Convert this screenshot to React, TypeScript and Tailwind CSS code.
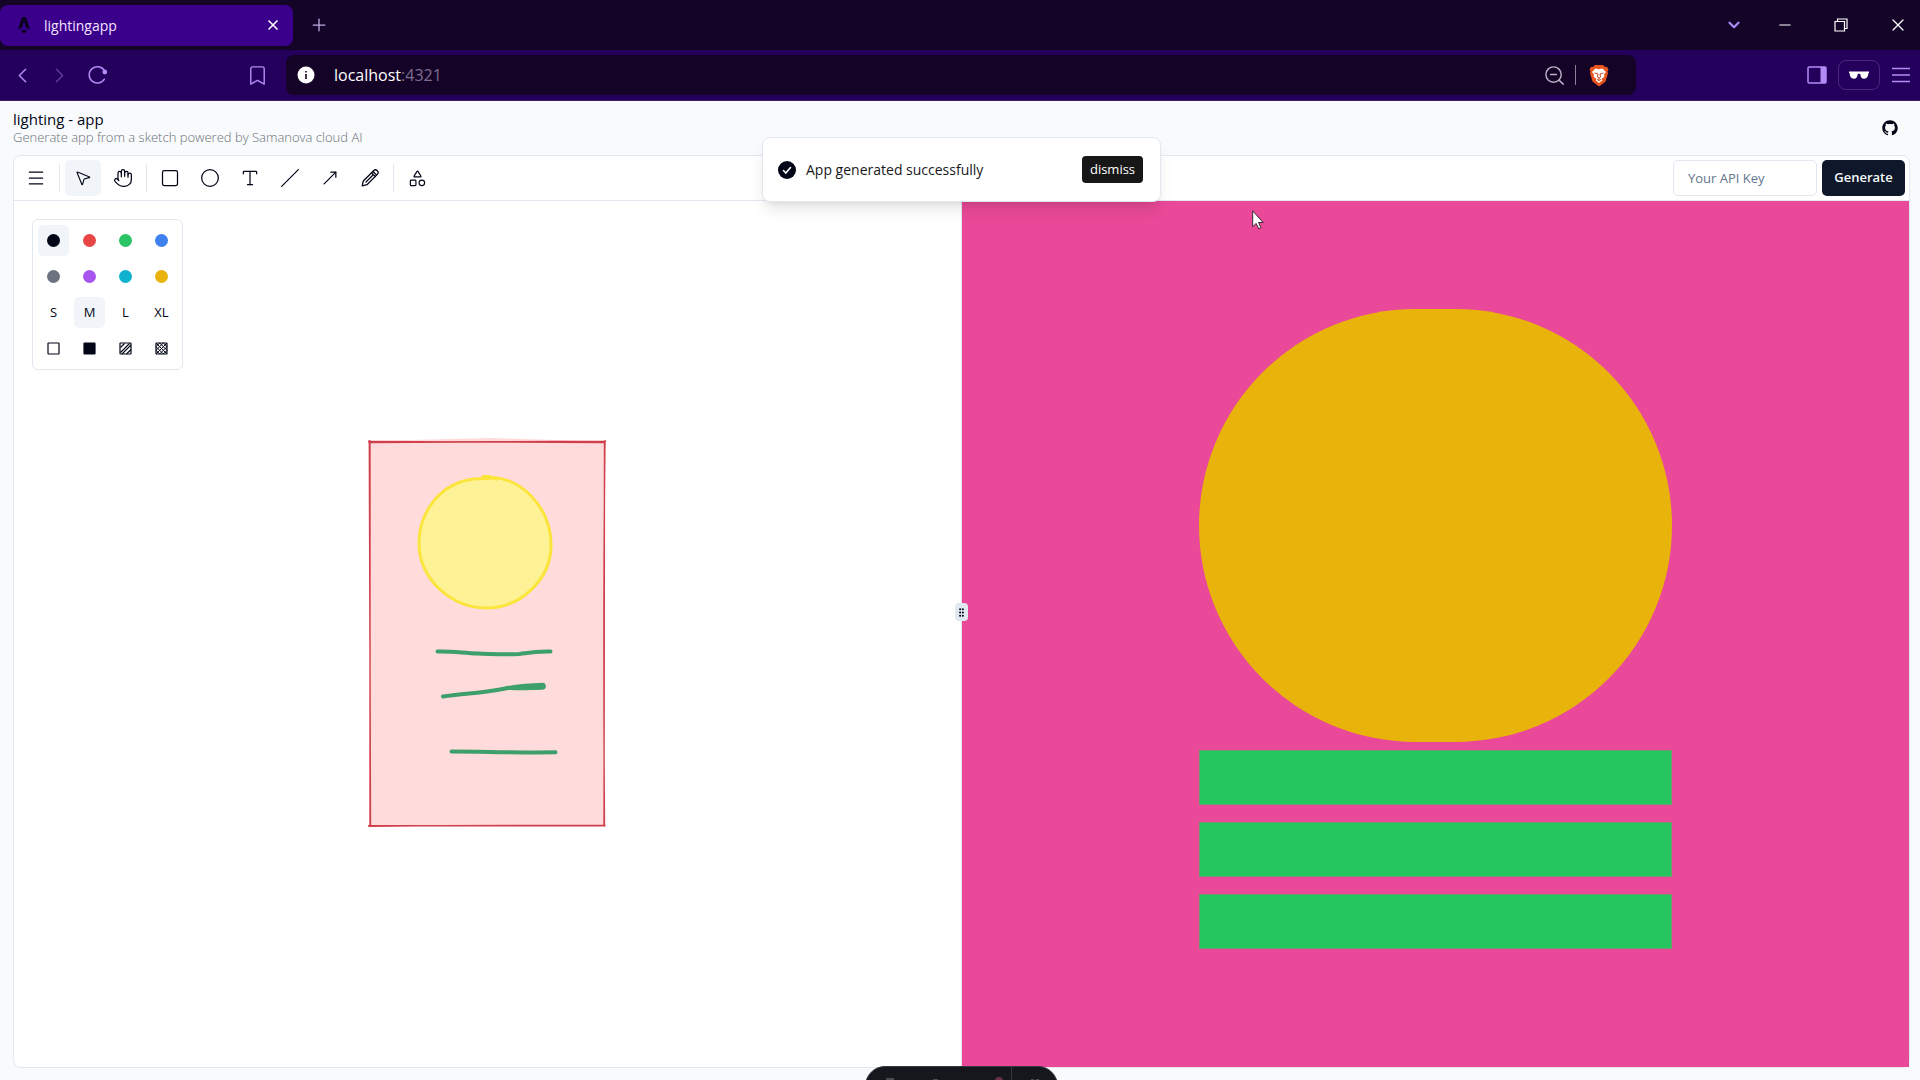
import React, { useState } from "react";
import {
  ChevronLeft,
  ChevronRight,
  ChevronDown,
  Circle,
  GripVertical,
  Bookmark,
  Hand,
  Menu,
  Minus,
  MousePointer2,
  MoveUpRight,
  Plus,
  Shapes,
  Slash,
  Square,
  Type,
  X,
  ZoomOut,
} from "lucide-react";
import { RxGithubLogo } from "react-icons/rx";

const COLORS = [
  { name: "black", className: "bg-[#020617]" },
  { name: "red", className: "bg-[#e84545]" },
  { name: "green", className: "bg-[#29c463]" },
  { name: "blue", className: "bg-[#3f81ee]" },
  { name: "gray", className: "bg-[#6b7280]" },
  { name: "purple", className: "bg-[#a855f0]" },
  { name: "cyan", className: "bg-[#0fb3d0]" },
  { name: "yellow", className: "bg-[#e8b30b]" },
];

const SIZES = ["S", "M", "L", "XL"];
const FILLS = ["none", "solid", "hachure", "cross"];

function ReloadIcon() {
  return (
    <svg width="20" height="20" viewBox="0 0 20 20" fill="none" stroke="currentColor" strokeWidth="1.5">
      <path d="M16.4 14.2a8.2 8.2 0 1 1 0-8.6" strokeLinecap="round" />
      <circle cx="16.8" cy="7" r="2.4" fill="currentColor" stroke="none" />
    </svg>
  );
}

function AstroIcon() {
  return (
    <svg width="14" height="18" viewBox="0 0 14 18" fill="#0b0220">
      <path d="M5 1h4l4 12.5q-2-1.1-4-1.4L7 5 5 12.1q-2 .3-4 1.4z" />
      <path d="M4 13.5q3 1.5 6 0 .3 2-3 4-3.3-2-3-4z" />
    </svg>
  );
}

function BraveIcon() {
  return (
    <svg width="20" height="23" viewBox="0 0 20 23">
      <path d="M6 1h8l2 2 2-.2 1.500 3-1 1.500.5 2-2.500 8.200-6.500 5-6.500-5L1 9.300l.5-2-1-1.500 1.500-3L4 3z" fill="#e8541d" />
      <path d="M6.500 4.500 10 5.200l3.500-.7L17 8l-2 2.600.4 2.200-3 2.200 1 1.200L10 19l-3.400-2.800 1-1.200-3-2.200.4-2.200L3 8z" fill="#fff" />
      <path d="M5.500 9 9 10l-.5 3L10 14l1.500-1L11 10l3.500-1M10 14v2M8 15.500l2 1 2-1" fill="none" stroke="#c8481a" />
    </svg>
  );
}

function PencilIcon({ size = 20 }: { size?: number; strokeWidth?: number }) {
  return (
    <svg width={size} height={size} viewBox="0 0 20 20" fill="none" stroke="currentColor" strokeWidth="1.25" strokeLinecap="round" strokeLinejoin="round">
      <path d="M2.200 17.800 3.300 13 13.600 2.700a2.500 2.500 0 0 1 3.700 3.700L7 16.700z" />
      <path d="M11.500 4.800l3.700 3.700M13.300 3.700l3.200 3.200M6 14l6.500-6.500" />
    </svg>
  );
}

function FillIcon({ kind }: { kind: string }) {
  return (
    <svg width="13" height="13" viewBox="0 0 13 13" fill={kind === "solid" ? "#020617" : "none"} stroke="#020617">
      <rect x="1" y="1" width="11" height="11" rx="0.5" strokeWidth="1.2" />
      {kind === "hachure" && <path d="M1.500 5.500l4-4M1.500 10.500l9-9M3 12l9-9M7.500 12 12 7.500" strokeWidth="1.1" />}
      {kind === "cross" && (
        <path d="M1 4.700 4.700 1M1 8.300 8.300 1M1 12 12 1M4.700 12 12 4.700M8.300 12 12 8.300M8.300 1 12 4.700M4.700 1 12 8.300M1 1l11 11M1 4.700 8.300 12M1 8.300 4.700 12" />
      )}
    </svg>
  );
}

function TabStrip() {
  return (
    <div className="flex h-[50px] items-center bg-[#130428] text-white">
      <div className="flex h-[41px] w-[293px] items-center rounded-lg bg-[#3a008c] pr-2 pl-[17px]">
        <AstroIcon />
        <span className="ml-[13px] flex-1 text-[14px] text-[#f0e4ff]">lightingapp</span>
        <button type="button" aria-label="Close tab" className="p-1">
          <X size={16} strokeWidth={2.5} />
        </button>
      </div>
      <button type="button" aria-label="New tab" className="ml-4 text-[#c3aee6]">
        <Plus size={20} strokeWidth={1.5} />
      </button>
      <div className="ml-auto flex items-center gap-[38px] pr-3">
        <button type="button" aria-label="Search tabs" className="mr-[-5px] text-[#a98bf5]">
          <ChevronDown size={18} strokeWidth={3} />
        </button>
        <button type="button" aria-label="Minimize">
          <Minus size={18} strokeWidth={1.5} />
        </button>
        <button type="button" aria-label="Restore">
          <svg width="18" height="18" viewBox="0 0 18 18" fill="none" stroke="currentColor" strokeWidth="1.2">
            <path d="M3 5.500h9.500V15H3zM5.500 5V3H15v9.500H13" />
          </svg>
        </button>
        <button type="button" aria-label="Close">
          <X size={20} strokeWidth={1.5} />
        </button>
      </div>
    </div>
  );
}

function AddressBar() {
  return (
    <div className="flex h-[51px] items-center border-b border-[#3c2160] bg-[#24005c] text-[#b18cf5]">
      <div className="flex w-[286px] items-center">
        <button type="button" aria-label="Back" className="ml-[10px]">
          <ChevronLeft size={25} strokeWidth={1.5} />
        </button>
        <button type="button" aria-label="Forward" className="ml-3 text-[#5f3c9c]">
          <ChevronRight size={25} strokeWidth={1.5} />
        </button>
        <button type="button" aria-label="Reload" className="ml-4">
          <ReloadIcon />
        </button>
        <button type="button" aria-label="Bookmark" className="mr-[17px] ml-auto">
          <Bookmark size={23} strokeWidth={1.5} />
        </button>
      </div>
      <div className="flex h-10 flex-1 items-center rounded-lg bg-[#140326] pr-[27px] pl-[11px]">
        <svg width="18" height="18" viewBox="0 0 18 18">
          <circle cx="9" cy="9" r="8.5" fill="#fff" />
          <path d="M9 8v5M9 5v1.500" stroke="#140326" strokeWidth="1.6" />
        </svg>
        <span className="ml-[19px] flex-1 text-[16px] text-white">
          localhost<span className="text-[#7d6f92]">:4321</span>
        </span>
        <ZoomOut size={23} strokeWidth={1.5} className="text-[#b9b1c6]" />
        <span className="mx-[9px] h-5 w-px bg-[#8a8198]" />
        <span className="ml-1">
          <BraveIcon />
        </span>
      </div>
      <div className="flex w-[284px] items-center justify-end gap-[11px] pr-[9px]">
        <button type="button" aria-label="Sidebar">
          <svg width="20" height="18" viewBox="0 0 20 18">
            <rect x="1" y="1" width="18" height="16" rx="1" fill="none" stroke="currentColor" strokeWidth="1.5" />
            <path d="M13.500 1H19v16h-5.500z" fill="currentColor" />
          </svg>
        </button>
        <button
          type="button"
          aria-label="Private window"
          className="flex h-[30px] w-[42px] items-center justify-center rounded-lg border border-[#49297d] text-white"
        >
          <svg width="22" height="9" viewBox="0 0 22 9" fill="currentColor">
            <path d="M1 .5h20v1.500h-.6c-.2 4-1.800 5.700-4.200 5.700-2.700 0-3.600-2-3.900-4.500-.8-.5-1.800-.5-2.600 0-.3 2.500-1.200 4.500-3.900 4.500-2.400 0-4-1.700-4.200-5.700H1z" />
          </svg>
        </button>
        <button type="button" aria-label="Menu">
          <svg width="20" height="16" viewBox="0 0 20 16" stroke="currentColor" strokeWidth="1.5">
            <path d="M1 1.500h18M1 8h18M1 14.500h18" />
          </svg>
        </button>
      </div>
    </div>
  );
}

type ToolProps = {
  label: string;
  active?: boolean;
  onClick?: () => void;
  children: React.ReactNode;
};

function Tool({ label, active, onClick, children }: ToolProps) {
  return (
    <button
      type="button"
      aria-label={label}
      onClick={onClick}
      className={`flex size-9 items-center justify-center rounded-[5px] ${active ? "bg-[#f1f5f9]" : ""}`}
    >
      {children}
    </button>
  );
}

function Divider() {
  return <span className="mx-px h-7 w-px bg-[#e2e8f0]" />;
}

const TOOLS = [
  { id: "Rectangle", Icon: Square },
  { id: "Ellipse", Icon: Circle },
  { id: "Text", Icon: Type },
  { id: "Line", Icon: Slash },
  { id: "Arrow", Icon: MoveUpRight },
  { id: "Draw", Icon: PencilIcon },
];

function Toolbar() {
  const [tool, setTool] = useState("Select");
  const [apiKey, setApiKey] = useState("");

  return (
    <div className="flex h-[45px] items-center gap-1 border-b border-[#e2e8f0] px-1">
      <Tool label="Menu">
        <Menu size={20} strokeWidth={1.5} />
      </Tool>
      <Divider />
      <Tool label="Select" active={tool === "Select"} onClick={() => setTool("Select")}>
        <MousePointer2 size={18} strokeWidth={1.5} />
      </Tool>
      <Tool label="Hand" active={tool === "Hand"} onClick={() => setTool("Hand")}>
        <Hand size={20} strokeWidth={1.5} />
      </Tool>
      <Divider />
      {TOOLS.map(({ id, Icon }) => (
        <Tool key={id} label={id} active={tool === id} onClick={() => setTool(id)}>
          <Icon size={20} strokeWidth={1.5} />
        </Tool>
      ))}
      <Divider />
      <Tool label="Shapes">
        <Shapes size={19} strokeWidth={1.5} />
      </Tool>
      <input
        aria-label="API key"
        value={apiKey}
        onChange={(e) => setApiKey(e.target.value)}
        placeholder="Your API Key"
        className="mr-px ml-auto h-9 w-36 rounded-[5px] border border-[#e2e8f0] px-[14px] text-[13px] outline-none placeholder:text-[#64748b]"
      />
      <button type="button" className="h-9 w-[83px] rounded-[5px] bg-[#0f172a] text-[13px] font-semibold text-[#f8fafc]">
        Generate
      </button>
    </div>
  );
}

function StylePanel() {
  const [color, setColor] = useState("black");
  const [size, setSize] = useState("M");
  const cell = "flex size-[31px] items-center justify-center rounded-[5px] text-[13px]";

  return (
    <div className="absolute top-[18px] left-[18px] grid grid-cols-4 gap-[5px] rounded-md border border-[#e2e8f0] bg-white p-[5px]">
      {COLORS.map((c) => (
        <button
          key={c.name}
          type="button"
          aria-label={c.name}
          onClick={() => setColor(c.name)}
          className={`${cell} ${color === c.name ? "bg-[#f1f5f9]" : ""}`}
        >
          <span className={`size-[13px] rounded-full ${c.className}`} />
        </button>
      ))}
      {SIZES.map((s) => (
        <button key={s} type="button" onClick={() => setSize(s)} className={`${cell} ${size === s ? "bg-[#f1f5f9]" : ""}`}>
          {s}
        </button>
      ))}
      {FILLS.map((f) => (
        <button key={f} type="button" aria-label={`Fill ${f}`} className={cell}>
          <FillIcon kind={f} />
        </button>
      ))}
    </div>
  );
}

function Sketch() {
  return (
    <svg className="absolute top-[219px] left-[326px]" width="300" height="420" viewBox="0 0 300 420" fill="none" strokeLinecap="round">
      <path d="M30 21 150 18 264.500 21.500 263.500 405.500H29.800z" fill="#ffdbdb" />
      <path
        d="M28.500 21.500 265 22.500M29 22.600Q150 22 265.500 21.200M30 21v385M29.300 21 30.500 405M265 20.500Q263 200 264.500 406M264.500 22 264 405M28.500 405.800H265M29 406.200Q150 405 264.500 405.500"
        stroke="#d0404c"
        strokeWidth="1.4"
      />
      <path
        d="M147 57.500c32-2 63 28 64 66 1 35-30 64.500-64 64.500-36 0-68-29-68-65C79 96 96 66 130 59.500q8-1 20-1"
        fill="#fef297"
        stroke="#fbe53c"
        strokeWidth="3"
      />
      <path d="M143 57q6-1.500 13 2" stroke="#fbe53c" strokeWidth="3.5" />
      <g stroke="#3d9f6c" strokeWidth="4">
        <path d="M97.500 231.500c14-.5 26 1.500 40 2 16 .5 28 1.500 42 .5 10-1.500 18-3 31-2.500" />
        <path d="M103 276.500c20-3 42-3.500 65-8.500" />
        <path d="M111.500 331.500c30 0 70 1.500 104 .8" />
      </g>
      {/* thick end of the second stroke */}
      <path d="M165 266.500q8-1.800 20-2.700l17-1c5-.3 5.500 7 0 7-12 .3-20 .8-35 .2z" fill="#3d9f6c" />
    </svg>
  );
}

function Preview() {
  return (
    <div className="flex flex-1 flex-col items-center bg-[#e94998] pt-[108px]">
      <div className="h-[433px] w-1/2 rounded-full bg-[#e8b30b]" />
      <div className="mt-2 flex w-1/2 flex-col gap-[17px]">
        <div className="h-[55px] border border-[#6f9a6c] bg-[#25c65f]" />
        <div className="h-[55px] border border-[#6f9a6c] bg-[#25c65f]" />
        <div className="h-[55px] border border-[#6f9a6c] bg-[#25c65f]" />
      </div>
    </div>
  );
}

function Toast() {
  return (
    <div className="absolute top-[137px] left-[762px] flex h-[65px] w-[399px] items-center rounded-lg border border-[#e2e8f0] bg-white pr-[17px] pl-[15px] shadow-lg">
      <svg width="18" height="18" viewBox="0 0 18 18">
        <circle cx="9" cy="9" r="9" fill="#020617" />
        <path d="m5.500 9.500 2.300 2.500 4.700-5.500" fill="none" stroke="#fff" strokeWidth="1.6" strokeLinecap="round" />
      </svg>
      <span className="ml-[10px] flex-1 text-[14px] text-[#17181c]">App generated successfully</span>
      <button type="button" className="h-[27px] w-[61px] rounded bg-[#171717] text-[13px] text-white">
        dismiss
      </button>
    </div>
  );
}

function DevToolbar() {
  return (
    <div className="absolute bottom-0 left-[865px] flex h-[14px] w-[193px] overflow-hidden">
      <div className="flex h-10 w-full shrink-0 rounded-full border border-[#343841] bg-[#16171d]">
        <svg width="191" height="14" viewBox="0 0 191 14" fill="#4a4c54">
          <path d="M20 11h8v3h-8zM67 12h5v2h-5zM165 12h3v2h-3zM170 12h3v2h-3z" />
          <path d="M129 14a4 4 0 0 1 8 0z" fill="#6b2f44" />
          <path d="M145 0h1v14h-1z" fill="#343841" />
        </svg>
      </div>
    </div>
  );
}

export default function App() {
  return (
    <div className="relative flex min-h-screen flex-col overflow-hidden bg-[#f8fafc] font-['Open_Sans','Noto_Sans',sans-serif] text-[#020617]">
      <TabStrip />
      <AddressBar />
      <header className="flex h-[54px] items-center justify-between pr-[22px] pl-[13px]">
        <div>
          <h1 className="text-[15px] leading-[18px]">lighting - app</h1>
          <p className="text-[13px] leading-[18px] font-light text-[#6b7078]">
            Generate app from a sketch powered by Samanova cloud AI
          </p>
        </div>
        <a href="https://github.com" aria-label="GitHub">
          <RxGithubLogo size={16} />
        </a>
      </header>
      <main className="mr-[10px] mb-3 ml-[13px] flex flex-1 flex-col rounded-lg border border-[#e2e8f0] bg-white">
        <Toolbar />
        <div className="flex flex-1">
          <div className="relative flex-1">
            <StylePanel />
            <Sketch />
          </div>
          <div className="relative w-px bg-[#e2e8f0]">
            <span className="absolute top-[402px] -left-[6px] z-10 flex h-[18px] w-[13px] items-center justify-center rounded bg-[#e2e8f0]">
              <GripVertical size={11} strokeWidth={2.5} />
            </span>
          </div>
          <Preview />
        </div>
      </main>
      <Toast />
      <DevToolbar />
      <svg className="absolute top-[210px] left-[1252px]" width="12" height="20" viewBox="0 0 12 20">
        <path d="M.7.9v15.800l3.500-3.300 2.500 5.400 2.200-1-2.400-5.300h4.700z" fill="#fff" stroke="#222" strokeWidth="0.9" />
      </svg>
    </div>
  );
}
